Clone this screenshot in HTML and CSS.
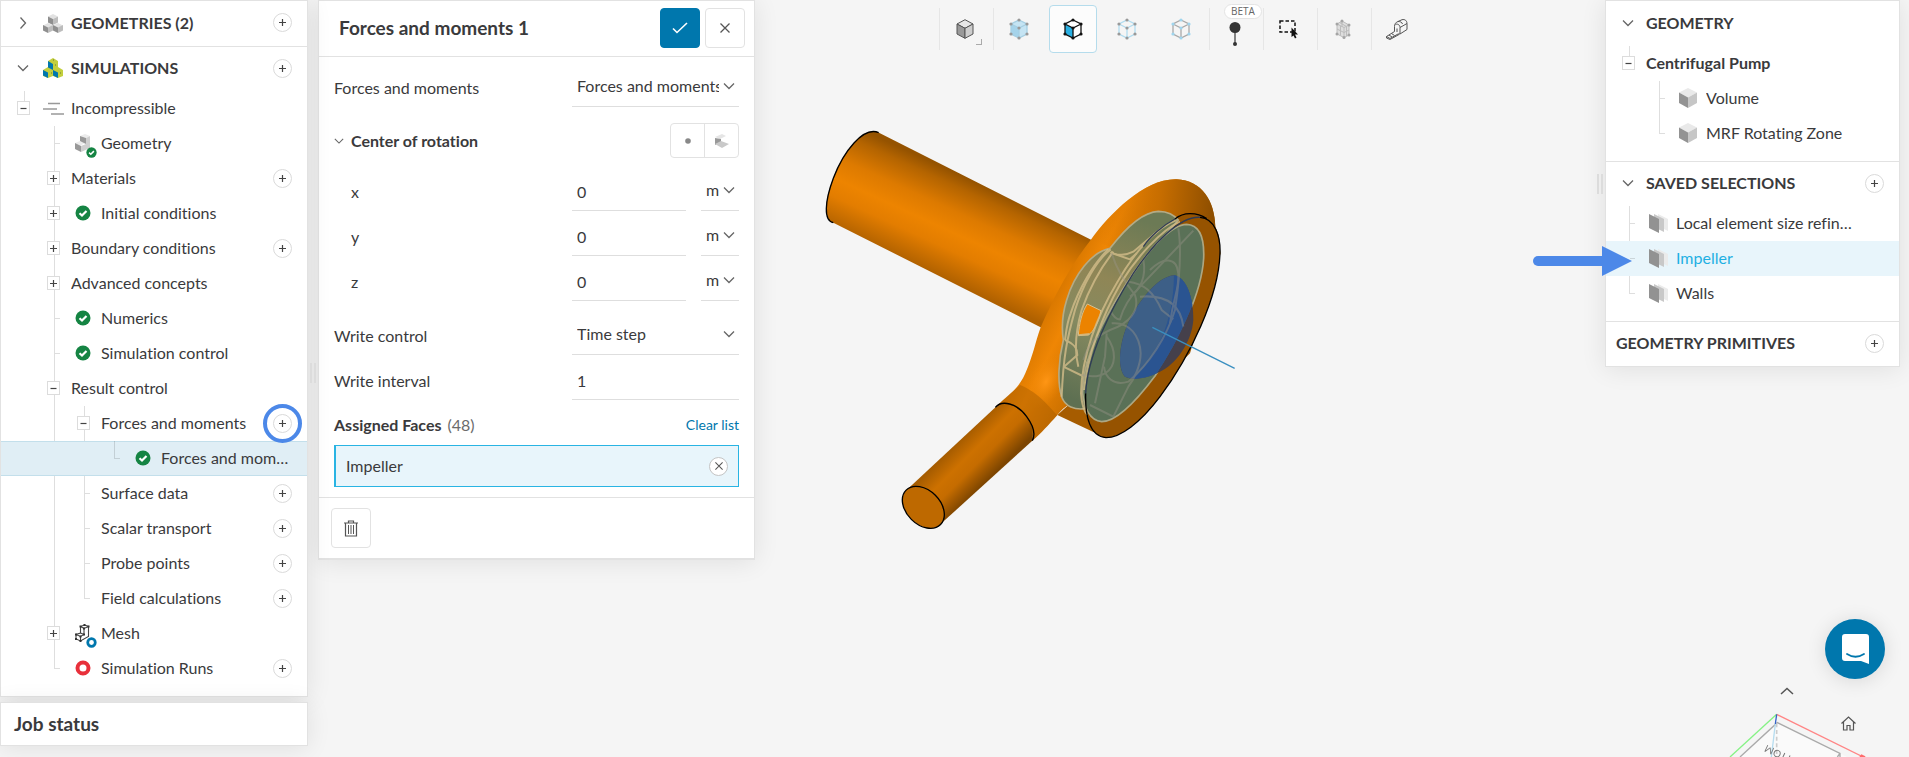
FILE: index.html
```html
<!DOCTYPE html>
<html lang="en">
<head>
    <meta charset="UTF-8">
    <meta name="viewport" content="width=device-width, initial-scale=1.0">
    <title>Centrifugal Pump - Forces and moments</title>
    <link rel="stylesheet" href="styles.css">
</head>
<body>
    <!-- Shared icons -->
    <svg class="sprite" aria-hidden="true">
        <symbol id="i-plus" viewBox="0 0 9 9"><path d="M4.5 1v7M1 4.5h7" stroke="#444" stroke-width="1.2"/></symbol>
        <symbol id="i-minus" viewBox="0 0 9 9"><path d="M1.5 4.5h6" stroke="#444" stroke-width="1.2"/></symbol>
        <symbol id="i-down" viewBox="0 0 12 12"><path d="M1 3.5l5 5 5-5" fill="none" stroke="#666" stroke-width="1.3"/></symbol>
        <symbol id="i-right" viewBox="0 0 14 14"><path d="M4.5 1.5l5 5.5-5 5.5" fill="none" stroke="#666" stroke-width="1.3"/></symbol>
        <symbol id="i-x" viewBox="0 0 10 10"><path d="M.5 .5l9 9M9.500 .5l-9 9" stroke="#555" stroke-width="1.3"/></symbol>
        <symbol id="i-ok" viewBox="0 0 16 16"><circle cx="8" cy="8" r="7.5" fill="#158443"/><path d="M4.5 8.2l2.500 2.300 4.500-4.500" fill="none" stroke="#fff" stroke-width="2.2"/></symbol>
        <symbol id="i-ring" viewBox="0 0 16 16"><circle cx="8" cy="8" r="5.5" fill="#fff" stroke="currentColor" stroke-width="4"/></symbol>
        <symbol id="i-cube" viewBox="0 0 18 20"><path d="M9 0l9 4.500-9 5-9-5z" fill="#e9e9e9"/><path d="M0 4.500l9 5V20l-9-5z" fill="#939393"/><path d="M18 4.500l-9 5V20l9-5z" fill="#c6c6c6"/></symbol>
        <symbol id="i-cubes" viewBox="0 0 20 20">
            <path d="M10 1l5 2.500-5 2.500-5-2.500zM5 10l5 2.500-5 2.500-5-2.500zM15 10l5 2.500-5 2.500-5-2.500z" fill="#e2e2e2"/>
            <path d="M5 3.500l5 2.500v6L5 9.500zM0 12l5 2.500V20l-5-2.500zM10 12l5 2.500V20l-5-2.500z" fill="#8f8f8f"/>
            <path d="M15 3.500L10 6v6l5-2.500zM10 12l-5 2.500V20l5-2.500zM20 12l-5 2.500V20l5-2.500z" fill="#bdbdbd"/>
        </symbol>
        <symbol id="i-cubes-color" viewBox="0 0 20 20">
            <path d="M10 0l5 3v6l5 3v6l-5 2-5-2-5 2-5-2v-6l5-3V3z" fill="#c3cf3d"/>
            <path d="M5 3l5 3v6L5 9.500zM0 12l5 2.500V20l-5-2.500zM10 12l5 2.500V20l-5-2.500z" fill="#0077ad"/>
            <path d="M12 7h1M8 15h1M17 15h1M10 2h1" stroke="#6a7a30"/>
        </symbol>
        <symbol id="i-part" viewBox="0 0 16 18">
            <path d="M5 2l5-2 5 2-4 2zM0 9l5-2 5 2-5 3z" fill="#ececec"/>
            <path d="M5 2l6 2v6L5 7zM0 9l6 3v6l-6-3z" fill="#999"/>
            <path d="M15 2l-4 2v6l-5 2v6l9-4z" fill="#cfcfcf"/>
        </symbol>
        <symbol id="i-mesh" viewBox="0 0 16 18">
            <path d="M5.500 2.500L9.500 1l4 1.500v10L5.500 17 1 15v-4.500L5.500 9zM5.500 2.500l3.500 2 4.500-2M9 4.500v6l-3.500 2L1 10.500M5.500 12.500V17M5.500 9L9 10.500" fill="none" stroke="#444" stroke-width="1.100"/>
            <path d="M4.500 1.500h2v2h-2zM8.500 0h2v2h-2zM12.500 1.500h2v2h-2zM8 3.500h2v2H8zM0 9.500h2v2H0zM4.500 11.500h2v2h-2zM0 14h2v2H0zM4.500 16h2v2h-2zM8 9.500h2v2H8z" fill="#333"/>
        </symbol>
        <symbol id="i-faces" viewBox="0 0 19 19">
            <path d="M9 0l10 5v12l-10-5z" fill="#ebebeb"/><path d="M5 0l10 5v13L5 13z" fill="#c8c8c8"/><path d="M0 0l10 5v14L0 14z" fill="#929292"/>
        </symbol>
        <symbol id="i-flow" viewBox="0 0 21 12"><path d="M5 1h12M0 6.500h14M8 11.500h13" stroke="#999" stroke-width="1.6"/></symbol>
        <symbol id="i-wire" viewBox="0 0 20 22">
            <path d="M10 2l8 4v10l-8 4-8-4V6zM2 6l8 4 8-4M10 10v10" fill="none" stroke="var(--edge)" stroke-width="1.3"/>
            <g fill="var(--dot)"><circle cx="10" cy="2" r="1.6"/><circle cx="18" cy="6" r="1.6"/><circle cx="18" cy="16" r="1.6"/><circle cx="10" cy="20" r="1.6"/><circle cx="2" cy="16" r="1.6"/><circle cx="2" cy="6" r="1.6"/><circle cx="10" cy="10" r="1.6"/></g>
        </symbol>
    </svg>

    <div class="app">
        <!-- Simulation tree -->
        <div class="sidebar">
            <nav class="panel">
                <section class="section">
                    <div class="heading">
                        <button class="fold" aria-label="Expand geometries"><svg width="14" height="14"><use href="#i-right"/></svg></button>
                        <span class="icon"><svg width="20" height="20"><use href="#i-cubes"/></svg></span>
                        <h2>GEOMETRIES (2)</h2>
                        <button class="add" aria-label="Add geometry"><svg width="9" height="9"><use href="#i-plus"/></svg></button>
                    </div>
                </section>
                <section class="section">
                    <div class="heading">
                        <button class="fold" aria-label="Collapse simulations"><svg width="12" height="12"><use href="#i-down"/></svg></button>
                        <span class="icon"><svg width="20" height="20"><use href="#i-cubes-color"/></svg></span>
                        <h2>SIMULATIONS</h2>
                        <button class="add" aria-label="Add simulation"><svg width="9" height="9"><use href="#i-plus"/></svg></button>
                    </div>
                    <ul class="tree">
                        <li>
                            <div class="row">
                                <button class="toggle" aria-label="Collapse"><svg width="9" height="9"><use href="#i-minus"/></svg></button>
                                <span class="icon"><svg width="21" height="13"><use href="#i-flow"/></svg></span>
                                <span class="name">Incompressible</span>
                            </div>
                            <ul>
                                <li class="leaf">
                                    <div class="row">
                                        <span class="icon"><svg width="16" height="18"><use href="#i-part"/></svg><svg class="badge" width="11" height="11"><use href="#i-ok"/></svg></span>
                                        <span class="name">Geometry</span>
                                    </div>
                                </li>
                                <li>
                                    <div class="row">
                                        <button class="toggle" aria-label="Expand"><svg width="9" height="9"><use href="#i-plus"/></svg></button>
                                        <span class="name">Materials</span>
                                        <button class="add" aria-label="Add material"><svg width="9" height="9"><use href="#i-plus"/></svg></button>
                                    </div>
                                </li>
                                <li>
                                    <div class="row">
                                        <button class="toggle" aria-label="Expand"><svg width="9" height="9"><use href="#i-plus"/></svg></button>
                                        <span class="icon"><svg width="16" height="16"><use href="#i-ok"/></svg></span>
                                        <span class="name">Initial conditions</span>
                                    </div>
                                </li>
                                <li>
                                    <div class="row">
                                        <button class="toggle" aria-label="Expand"><svg width="9" height="9"><use href="#i-plus"/></svg></button>
                                        <span class="name">Boundary conditions</span>
                                        <button class="add" aria-label="Add boundary condition"><svg width="9" height="9"><use href="#i-plus"/></svg></button>
                                    </div>
                                </li>
                                <li>
                                    <div class="row">
                                        <button class="toggle" aria-label="Expand"><svg width="9" height="9"><use href="#i-plus"/></svg></button>
                                        <span class="name">Advanced concepts</span>
                                    </div>
                                </li>
                                <li class="leaf">
                                    <div class="row">
                                        <span class="icon"><svg width="16" height="16"><use href="#i-ok"/></svg></span>
                                        <span class="name">Numerics</span>
                                    </div>
                                </li>
                                <li class="leaf">
                                    <div class="row">
                                        <span class="icon"><svg width="16" height="16"><use href="#i-ok"/></svg></span>
                                        <span class="name">Simulation control</span>
                                    </div>
                                </li>
                                <li>
                                    <div class="row">
                                        <button class="toggle" aria-label="Collapse"><svg width="9" height="9"><use href="#i-minus"/></svg></button>
                                        <span class="name">Result control</span>
                                    </div>
                                    <ul>
                                        <li>
                                            <div class="row">
                                                <button class="toggle" aria-label="Collapse"><svg width="9" height="9"><use href="#i-minus"/></svg></button>
                                                <span class="name">Forces and moments</span>
                                                <button class="add highlight" aria-label="Add forces and moments"><svg width="9" height="9"><use href="#i-plus"/></svg></button>
                                            </div>
                                            <ul>
                                                <li class="leaf">
                                                    <div class="row selected">
                                                        <span class="icon"><svg width="16" height="16"><use href="#i-ok"/></svg></span>
                                                        <span class="name">Forces and moments 1</span>
                                                    </div>
                                                </li>
                                            </ul>
                                        </li>
                                        <li class="leaf">
                                            <div class="row">
                                                <span class="name">Surface data</span>
                                                <button class="add" aria-label="Add surface data"><svg width="9" height="9"><use href="#i-plus"/></svg></button>
                                            </div>
                                        </li>
                                        <li class="leaf">
                                            <div class="row">
                                                <span class="name">Scalar transport</span>
                                                <button class="add" aria-label="Add scalar transport"><svg width="9" height="9"><use href="#i-plus"/></svg></button>
                                            </div>
                                        </li>
                                        <li class="leaf">
                                            <div class="row">
                                                <span class="name">Probe points</span>
                                                <button class="add" aria-label="Add probe points"><svg width="9" height="9"><use href="#i-plus"/></svg></button>
                                            </div>
                                        </li>
                                        <li class="leaf">
                                            <div class="row">
                                                <span class="name">Field calculations</span>
                                                <button class="add" aria-label="Add field calculation"><svg width="9" height="9"><use href="#i-plus"/></svg></button>
                                            </div>
                                        </li>
                                    </ul>
                                </li>
                                <li>
                                    <div class="row">
                                        <button class="toggle" aria-label="Expand"><svg width="9" height="9"><use href="#i-plus"/></svg></button>
                                        <span class="icon"><svg width="16" height="18"><use href="#i-mesh"/></svg><svg class="badge blue" width="11" height="11"><use href="#i-ring"/></svg></span>
                                        <span class="name">Mesh</span>
                                    </div>
                                </li>
                                <li class="leaf">
                                    <div class="row">
                                        <span class="icon red"><svg width="16" height="16"><use href="#i-ring"/></svg></span>
                                        <span class="name">Simulation Runs</span>
                                        <button class="add" aria-label="Add run"><svg width="9" height="9"><use href="#i-plus"/></svg></button>
                                    </div>
                                </li>
                            </ul>
                        </li>
                    </ul>
                </section>
            </nav>
            <div class="panel job-status"><h3>Job status</h3></div>
            <span class="handle"></span>
        </div>

        <!-- Settings of the selected item -->
        <form class="panel settings">
            <header class="settings-header">
                <h3>Forces and moments 1</h3>
                <button type="submit" class="btn btn-primary" aria-label="Apply"><svg width="16" height="12" viewBox="0 0 16 12"><path d="M1 6.500l4 4L15 1" fill="none" stroke="#fff" stroke-width="1.6"/></svg></button>
                <button type="button" class="btn" aria-label="Close"><svg width="10" height="10"><use href="#i-x"/></svg></button>
            </header>
            <div class="settings-body">
                <div class="field-row">
                    <label for="type">Forces and moments</label>
                    <div class="select">
                        <select id="type"><option>Forces and moments</option></select>
                        <svg width="12" height="12"><use href="#i-down"/></svg>
                    </div>
                </div>
                <div class="group-row">
                    <button type="button" class="fold-small" aria-label="Collapse center of rotation"><svg width="10" height="10"><use href="#i-down"/></svg></button>
                    <h4>Center of rotation</h4>
                    <div class="btn-group">
                        <button type="button" aria-label="Pick point"><svg width="6" height="6" viewBox="0 0 6 6"><circle cx="3" cy="3" r="2.8" fill="#888"/></svg></button>
                        <button type="button" aria-label="Pick volume"><svg width="14" height="14" viewBox="0 0 14 14"><path d="M0 3l7-3 4 2-6 3z" fill="#e5e5e5"/><path d="M0 4l6 1v3l-6 3z" fill="#999"/><path d="M0 10l6-3 8 3-7 4z" fill="#c9c9c9"/></svg></button>
                    </div>
                </div>
                <div class="field-row">
                    <label class="indent" for="cx">x</label>
                    <input class="value" id="cx" type="text" value="0">
                    <div class="select unit">
                        <select aria-label="Unit of x"><option>m</option></select>
                        <svg width="12" height="12"><use href="#i-down"/></svg>
                    </div>
                </div>
                <div class="field-row">
                    <label class="indent" for="cy">y</label>
                    <input class="value" id="cy" type="text" value="0">
                    <div class="select unit">
                        <select aria-label="Unit of y"><option>m</option></select>
                        <svg width="12" height="12"><use href="#i-down"/></svg>
                    </div>
                </div>
                <div class="field-row">
                    <label class="indent" for="cz">z</label>
                    <input class="value" id="cz" type="text" value="0">
                    <div class="select unit">
                        <select aria-label="Unit of z"><option>m</option></select>
                        <svg width="12" height="12"><use href="#i-down"/></svg>
                    </div>
                </div>
                <div class="field-row spaced">
                    <label for="write-control">Write control</label>
                    <div class="select">
                        <select id="write-control"><option>Time step</option></select>
                        <svg width="12" height="12"><use href="#i-down"/></svg>
                    </div>
                </div>
                <div class="field-row">
                    <label for="write-interval">Write interval</label>
                    <input id="write-interval" type="text" value="1">
                </div>
                <div class="faces-row">
                    <h4>Assigned Faces</h4>
                    <span class="count">(48)</span>
                    <a href="#">Clear list</a>
                </div>
                <div class="face">
                    <span>Impeller</span>
                    <button type="button" class="remove" aria-label="Remove Impeller"><svg width="8" height="8"><use href="#i-x"/></svg></button>
                </div>
            </div>
            <footer class="settings-footer">
                <button type="button" class="btn" aria-label="Delete">
                    <svg width="14" height="17" viewBox="0 0 14 17" fill="none" stroke="#555"><path d="M0 3h14M4.500 3V1h5v2M1.500 3v13h11V3" stroke-width="1.2"/><path d="M4.500 5v9M7 5v9M9.500 5v9"/></svg>
                </button>
            </footer>
        </form>

        <!-- 3D view -->
        <main class="viewer">
            <div class="toolbar">
                <button class="divided corner-mark" aria-label="Render mode">
                    <svg width="18" height="20" viewBox="0 0 18 20" stroke="#555" stroke-linejoin="round"><path d="M9 .7l8 4.300-8 4.300L1 5z" fill="#e6e6e6"/><path d="M1 5l8 4.300v10L1 15z" fill="#999"/><path d="M17 5L9 9.300v10l8-4.300z" fill="#cdcdcd"/></svg>
                </button>
                <button class="divided tool-volume" aria-label="Select volumes"><svg width="20" height="22" viewBox="0 0 20 22"><path d="M10 2l8 4v10l-8 4-8-4V6z" fill="#c5e4f3"/><path d="M2 6l8 4v10l-8-4z" fill="#a5d3ea"/><use href="#i-wire"/></svg></button>
                <button class="active tool-face" aria-label="Select faces"><svg width="20" height="22" viewBox="0 0 20 22"><path d="M10 2l8 4v10l-8 4-8-4V6z" fill="#fff"/><path d="M2 6l8 4v10l-8-4z" fill="#29b0e3"/><use href="#i-wire"/></svg></button>
                <button class="tool-vertex" aria-label="Select vertices"><svg width="20" height="22"><use href="#i-wire"/></svg></button>
                <button class="tool-edge" aria-label="Select edges"><svg width="20" height="22"><use href="#i-wire"/></svg></button>
                <button class="divided" aria-label="Probe">
                    <span class="beta">BETA</span>
                    <svg class="probe" width="12" height="24" viewBox="0 0 12 24"><path d="M6 5v17" stroke="#444" stroke-width="1.3"/><circle cx="6" cy="5.5" r="5.5" fill="#333"/><circle cx="6" cy="22" r="2" fill="#333"/></svg>
                </button>
                <button class="divided" aria-label="Box select"><svg width="20" height="20" viewBox="0 0 20 20"><path d="M1 2h15v11H1z" fill="none" stroke="#111" stroke-width="1.5" stroke-dasharray="3.5 2"/><path d="M12.500 8.500l6.500 7h-3l1.500 3-1.500 1-1.500-3-2 1.500z" fill="#111"/></svg></button>
                <button class="divided" aria-label="Mesh clip">
                    <svg width="16" height="20" viewBox="0 0 16 20"><path d="M2 5l5-3 7 4v10l-5 2.500L2 15z" fill="#dedede"/><path d="M2 5l7 3.500 5-2.500M9 8.500v10M7 2v6M2 5l5-3 7 4v10l-5 2.500L2 15zM2 10l7 3.500 5-2.500M5.500 7v9.500M4.500 3.500l7 4v9.500" fill="none" stroke="#bcbcbc"/><g fill="#a5a5a5"><circle cx="2" cy="5" r="1.5"/><circle cx="7" cy="2" r="1.5"/><circle cx="14" cy="6" r="1.5"/><circle cx="14" cy="16" r="1.5"/><circle cx="9" cy="18.500" r="1.5"/><circle cx="2" cy="15" r="1.5"/></g></svg>
                </button>
                <button class="divided" aria-label="Measure">
                    <svg width="22" height="21" viewBox="0 0 22 21" fill="none" stroke="#555"><path d="M8.500 12.500V7.500C8.500 5 10 3 12 2.500L16 .7c3-.7 5 1 5 4v5.800l-7 4.500V8.500C14 5.500 11 4.500 9.500 5.500M14 8.500l7-4M12 2.500c2 0 4 .5 4.500 2.500"/><path d="M11 13V9.500M8.500 12.500l-8 5 3.500 2 8-4.500 2 0M0.500 17.500v1.500l3.500 1.500 9-5M3 16l3 2M5.500 14.500l3 2" /></svg>
                </button>
            </div>

            <svg class="scene" viewBox="-135 -159 2550 2100" preserveAspectRatio="xMidYMin meet" role="img" aria-label="Centrifugal pump model">
                <defs>
                    <linearGradient id="g-inlet" gradientUnits="userSpaceOnUse" x1="552" y1="228" x2="426" y2="502">
                        <stop offset="0" stop-color="#955300"/><stop offset=".12" stop-color="#b46400"/><stop offset=".35" stop-color="#dd7a00"/><stop offset=".55" stop-color="#ed8400"/><stop offset=".72" stop-color="#e37d00"/><stop offset="1" stop-color="#b06100"/>
                    </linearGradient>
                    <linearGradient id="g-outlet" gradientUnits="userSpaceOnUse" x1="460" y1="1010" x2="562" y2="1112">
                        <stop offset="0" stop-color="#a65c00"/><stop offset=".35" stop-color="#cd7100"/><stop offset=".6" stop-color="#c56c00"/><stop offset="1" stop-color="#7d4500"/>
                    </linearGradient>
                    <linearGradient id="g-volute" gradientUnits="userSpaceOnUse" x1="700" y1="560" x2="1240" y2="840">
                        <stop offset="0" stop-color="#9c5700"/><stop offset=".09" stop-color="#d97800"/><stop offset=".2" stop-color="#ef8604"/><stop offset=".42" stop-color="#c76e00"/><stop offset="1" stop-color="#8a4c00"/>
                    </linearGradient>
                    <linearGradient id="g-top" gradientUnits="userSpaceOnUse" x1="900" y1="300" x2="1245" y2="330">
                        <stop offset="0" stop-color="#dc7900" stop-opacity="0"/><stop offset=".5" stop-color="#c86e00"/><stop offset="1" stop-color="#8b4d00"/>
                    </linearGradient>
                    <linearGradient id="g-back" gradientUnits="userSpaceOnUse" x1="1000" y1="320" x2="800" y2="860">
                        <stop offset="0" stop-color="#6c7a55"/><stop offset=".35" stop-color="#8f8656"/><stop offset=".6" stop-color="#868a60"/><stop offset="1" stop-color="#5e7052"/>
                    </linearGradient>
                    <radialGradient id="g-glow"><stop offset="0" stop-color="#ff9615"/><stop offset="1" stop-color="#ef8604" stop-opacity="0"/></radialGradient>
                    <clipPath id="front-clip"><path d="M1160 343C1204 345 1213 395 1211 445C1205 550 1135 695 1065 798C1000 885 945 935 905 935C868 932 852 890 848 850C846 740 925 600 1000 490C1050 415 1115 343 1160 343Z"/></clipPath>
                </defs>

                <!-- Inlet pipe -->
                <path d="M234 67L900 403L760 671L100 338C70 330 74 270 100 205C130 125 190 48 234 67Z" fill="url(#g-inlet)"/>
                <path d="M236 68C190 48 130 125 100 205C74 275 70 332 100 338" fill="none" stroke="#000" stroke-width="4"/>

                <!-- Volute -->
                <path d="M772 915L880 966L960 930L900 800Z" fill="#a65c00"/>
                <path d="M872 390C930 310 1035 205 1130 208C1205 212 1243 270 1246 350L1262 430L1170 730L1000 900L880 880C840 870 810 868 772 915C745 945 725 968 697 992C705 930 650 870 588 890C630 850 655 838 676 790C700 735 705 700 722 652C750 590 800 480 872 390Z" fill="url(#g-volute)"/>
                <path d="M872 390C930 310 1035 205 1130 208C1205 212 1243 270 1246 350L1180 430L960 420Z" fill="url(#g-top)"/>
                <ellipse cx="738" cy="815" rx="50" ry="85" transform="rotate(25 738 815)" fill="url(#g-glow)"/>
                <path d="M588 890C630 850 640 845 660 825C720 850 745 890 772 915C745 945 725 968 697 992C705 930 650 870 588 890Z" fill="#a45a00" opacity=".45"/>

                <!-- Outlet pipe -->
                <path d="M319 1141L588 890C640 860 710 920 697 992L421 1243Z" fill="url(#g-outlet)"/>
                <path d="M586 892C605 870 650 878 680 920C702 950 706 975 697 992" fill="none" stroke="#000" stroke-width="4"/>
                <ellipse cx="370" cy="1192" rx="73" ry="51" transform="rotate(45 370 1192)" fill="#be6900" stroke="#000" stroke-width="4"/>

                <!-- Front disc -->
                <path d="M1125 327C1150 306 1190 306 1220 326C1250 340 1262 380 1260 430C1256 560 1170 740 1080 860C1020 940 960 983 918 983C870 980 855 920 857 850C862 740 930 600 1000 490C1050 415 1080 360 1125 327Z" fill="#965300"/>

                <!-- Impeller -->
                <path d="M1075 304C1105 304 1120 315 1135 330L1000 490L860 760L855 896C825 900 795 890 785 860C772 820 775 750 790 690C784 650 786 615 800 570C822 495 875 425 930 415C980 350 1030 306 1075 304Z" fill="url(#g-back)" stroke="#b5ab85" stroke-width="5"/>
                <path d="M862 582L903 602C895 640 880 665 865 675L835 676C838 640 846 605 862 582Z" fill="#ec8300" stroke="#d9c08c" stroke-width="3"/>
                <path d="M1160 343C1204 345 1213 395 1211 445C1205 550 1135 695 1065 798C1000 885 945 935 905 935C868 932 852 890 848 850C846 740 925 600 1000 490C1050 415 1115 343 1160 343Z" fill="#5a7157" stroke="#aca783" stroke-width="5"/>

                <!-- Hub -->
                <path d="M1122 496C1160 500 1182 570 1180 630C1175 700 1125 765 1080 785C1040 805 1000 812 975 800C950 770 960 700 980 650C1010 580 1070 500 1122 496Z" fill="#45404b"/>
                <g clip-path="url(#front-clip)">
                    <path d="M1122 496C1160 500 1182 570 1180 630C1175 700 1125 765 1080 785C1040 805 1000 812 975 800C950 770 960 700 980 650C1010 580 1070 500 1122 496Z" fill="#3d5f87"/>
                    <path d="M1122 496C1160 500 1182 570 1180 630C1175 700 1125 765 1080 785C1050 800 1020 806 1000 806C1070 740 1120 640 1122 496Z" fill="#2a5491"/>
                </g>

                <!-- Blade edges -->
                <g fill="none" stroke="#d3bd8a" stroke-width="6" opacity=".8">
                    <path d="M932 418C890 450 850 520 825 600C800 690 790 740 785 860"/>
                    <path d="M940 425C905 470 870 530 845 600C825 670 822 720 835 770"/>
                    <path d="M925 418C880 460 835 540 812 610C800 640 798 670 795 690"/>
                    <path d="M1130 330C1070 350 1000 430 950 520C890 620 845 740 843 850C845 880 850 900 862 915"/>
                    <path d="M1140 335C1085 360 1010 440 962 520C905 620 862 740 852 840"/>
                    <path d="M932 428L990 448L1010 430M790 770L848 798M835 676L868 672M795 690C820 700 832 712 832 735L792 770"/>
                    <path d="M932 425C950 440 980 435 1000 425L1075 362"/>
                </g>
                <g fill="none" stroke="#9b968a" stroke-width="6" opacity=".4">
                    <path d="M1180 362L1020 530C980 570 965 610 960 628C945 630 935 610 930 600"/>
                    <path d="M935 430C950 480 985 530 1005 555C1020 600 990 640 930 660C890 680 870 690 850 750"/>
                    <path d="M1030 450C1040 500 1020 540 990 560M1050 480C1090 440 1130 440 1135 490C1138 540 1120 560 1110 640"/>
                    <path d="M1135 355C1145 420 1140 500 1125 600C1100 680 1050 760 985 815C940 830 915 800 912 770"/>
                    <path d="M920 680C950 720 950 770 915 790C890 805 860 798 845 795M885 880L915 740L920 670"/>
                    <path d="M935 640C990 635 1020 680 1022 730C1022 770 1000 810 985 830L940 920L870 885"/>
                    <path d="M985 515C1030 520 1060 545 1085 600L1120 628M1020 560C1080 555 1140 570 1150 650"/>
                </g>

                <path d="M1125 327C1150 306 1190 306 1220 326M1200 322C1245 325 1262 380 1260 430C1256 560 1170 740 1080 860C1020 940 960 983 918 983C870 980 855 920 857 850" fill="none" stroke="#000" stroke-width="4"/>
                <path d="M1200 322C1140 318 1060 400 1000 490C930 600 862 740 857 850M1125 327C1090 345 1050 380 1030 410" fill="none" stroke="#2f3c55" stroke-width="4"/>

                <!-- Rotation axis -->
                <path d="M1057 652L1304 775" stroke="#3a8fc0" stroke-width="4"/>
            </svg>
        </main>

        <!-- Geometry tree -->
        <div class="geometry">
            <div class="panel">
                <section class="section">
                    <div class="heading">
                        <button class="fold" aria-label="Collapse geometry"><svg width="12" height="12"><use href="#i-down"/></svg></button>
                        <h2>GEOMETRY</h2>
                    </div>
                    <ul class="tree">
                        <li>
                            <div class="row">
                                <button class="toggle" aria-label="Collapse"><svg width="9" height="9"><use href="#i-minus"/></svg></button>
                                <span class="name strong">Centrifugal Pump</span>
                            </div>
                            <ul>
                                <li class="leaf">
                                    <div class="row">
                                        <span class="icon"><svg width="18" height="20"><use href="#i-cube"/></svg></span>
                                        <span class="name">Volume</span>
                                    </div>
                                </li>
                                <li class="leaf">
                                    <div class="row">
                                        <span class="icon"><svg width="18" height="20"><use href="#i-cube"/></svg></span>
                                        <span class="name">MRF Rotating Zone</span>
                                    </div>
                                </li>
                            </ul>
                        </li>
                    </ul>
                </section>
                <section class="section">
                    <div class="heading">
                        <button class="fold" aria-label="Collapse saved selections"><svg width="12" height="12"><use href="#i-down"/></svg></button>
                        <h2>SAVED SELECTIONS</h2>
                        <button class="add" aria-label="Add selection"><svg width="9" height="9"><use href="#i-plus"/></svg></button>
                    </div>
                    <ul class="tree">
                        <li class="leaf">
                            <div class="row">
                                <span class="icon"><svg width="19" height="19"><use href="#i-faces"/></svg></span>
                                <span class="name">Local element size refinement</span>
                            </div>
                        </li>
                        <li class="leaf">
                            <div class="row picked">
                                <span class="icon"><svg width="19" height="19"><use href="#i-faces"/></svg></span>
                                <span class="name">Impeller</span>
                                <svg class="arrow" width="99" height="30" viewBox="0 0 99 30" aria-hidden="true"><path d="M5 15h66" stroke="#4c88e8" stroke-width="10" stroke-linecap="round"/><path d="M69 0l30 15-30 15z" fill="#4c88e8"/></svg>
                            </div>
                        </li>
                        <li class="leaf">
                            <div class="row">
                                <span class="icon"><svg width="19" height="19"><use href="#i-faces"/></svg></span>
                                <span class="name">Walls</span>
                            </div>
                        </li>
                    </ul>
                </section>
                <section class="section">
                    <div class="heading flush">
                        <h2>GEOMETRY PRIMITIVES</h2>
                        <button class="add" aria-label="Add primitive"><svg width="9" height="9"><use href="#i-plus"/></svg></button>
                    </div>
                </section>
            </div>
            <span class="handle"></span>
        </div>
    </div>

    <!-- View cube and chat -->
    <div class="corner">
        <svg class="view-cube" viewBox="0 0 627 471" fill="none">
            <path d="M232 368L120 471H440L420 460Z" fill="#fafafa"/>
            <path d="M120 471L232 368L420 460V471M420 460L412 471" stroke="#aaa" stroke-width="4"/>
            <path d="M230 370V471" stroke="#ccc" stroke-width="5" stroke-dasharray="12 8"/>
            <path d="M90 471L230 343" stroke="#85f285" stroke-width="4"/>
            <path d="M230 343L490 471" stroke="#ff8585" stroke-width="4"/>
            <path d="M478 471l6-8 12 6v2z" fill="#ff6b6b"/>
            <path d="M230 343L226 372" stroke="#3564c8" stroke-width="4"/>
            <path d="M226 372L214 471" stroke="#b5dcef" stroke-width="4"/>
            <text x="200" y="434" text-anchor="end" transform="rotate(205 200 434)" font-size="30" fill="#777">BOTTOM</text>
        </svg>
        <button class="rotate-up" aria-label="Rotate up"><svg width="14" height="8" viewBox="0 0 14 8"><path d="M1 7l6-5.500L13 7" fill="none" stroke="#555" stroke-width="1.5"/></svg></button>
        <button class="home" aria-label="Home view"><svg width="15" height="15" viewBox="0 0 15 15" fill="none" stroke="#555" stroke-width="1.2"><path d="M.5 7.500l7-6.500 7 6.500M2.500 6v8h3.500V9.500h3V14h3.500V6"/></svg></button>
        <button class="chat" aria-label="Open chat"><svg width="27" height="30" viewBox="0 0 27 30"><path d="M3 0h21a3 3 0 0 1 3 3v27l-8-3H3a3 3 0 0 1-3-3V3a3 3 0 0 1 3-3z" fill="#fff"/><path d="M5 20q8.500 5.500 17 0" fill="none" stroke="#0077ad" stroke-width="1.8" stroke-linecap="round"/></svg></button>
    </div>
</body>
</html>
```

FILE: styles.css
```css
/* Global Styling */
* {
    margin: 0;
    padding: 0;
    box-sizing: border-box;
}

:root {
    --line: #e2e2e2;
    --blue: #0077ad;
    --text: #3a3a3c;
}

body {
    height: 100vh;
    overflow: hidden;
    background: #f5f5f5;
    color: var(--text);
    font-family: "Lato", sans-serif;
    font-size: 16px;
    line-height: 20px;
    font-variant-ligatures: none;
}

button, input, select {
    font: inherit;
    color: inherit;
    border: none;
    background: none;
    outline: none;
    border-radius: 0;
}

button {
    display: flex;
    align-items: center;
    justify-content: center;
    flex: none;
    cursor: pointer;
}

svg {
    display: block;
    flex: none;
}

ul {
    list-style: none;
}

h2, h3, h4 {
    font-size: 16px;
    font-weight: 700;
}

h3 {
    font-size: 19px;
}

.sprite {
    position: absolute;
    width: 0;
    height: 0;
}

/* Page layout */
.app {
    display: grid;
    grid-template-columns: 308px 437px minmax(0, 1fr) 295px;
    align-items: start;
    height: 100vh;
    padding-right: 9px;
}

.panel {
    background: #fff;
    border: 1px solid var(--line);
    box-shadow: 0 2px 24px rgba(0, 0, 0, 0.09);
}

.sidebar {
    position: relative;
    display: flex;
    flex-direction: column;
    gap: 5px;
}

.settings {
    margin-left: 10px;
    margin-right: -10px;
    border-bottom-width: 2px;
}

.job-status {
    padding: 11px 13px;
}

.geometry {
    position: relative;
}

/* Drag handles beside the panels */
.handle {
    position: absolute;
    top: 50%;
    right: -8px;
    width: 6px;
    height: 20px;
    margin-top: -10px;
    border: 2px solid #dcdcdc;
    border-width: 0 2px;
}

.geometry .handle {
    right: auto;
    left: -8px;
}

/* Sections and trees */
.section + .section {
    border-top: 1px solid var(--line);
}

.heading {
    display: flex;
    align-items: center;
    height: 45px;
    padding: 0 15px 2px 15px;
}

.section + .section .heading {
    height: 44px;
}

.heading.flush {
    padding-left: 10px;
}

.heading h2 {
    flex: 1;
}

.fold {
    width: 14px;
    height: 14px;
    margin-right: 11px;
}

.icon {
    position: relative;
    display: flex;
    align-items: center;
    justify-content: center;
    flex: none;
    width: 24px;
    height: 24px;
    margin-right: 6px;
}

.badge {
    position: absolute;
    right: -2px;
    bottom: -3px;
}

.blue {
    color: var(--blue);
}

.red {
    color: #e8303b;
}

.add {
    position: relative;
    width: 19px;
    height: 19px;
    border: 1px solid #dadada;
    border-radius: 50%;
    background: #fff;
}

.highlight::after {
    content: "";
    position: absolute;
    z-index: 2;
    inset: -11px;
    border: 4px solid #4c88e8;
    border-radius: 50%;
}

.tree {
    --depth: 0;
    padding-bottom: 10px;
}

.tree ul {
    --depth: 1;
}

.tree ul ul {
    --depth: 2;
}

.tree ul ul ul {
    --depth: 3;
}

.tree li {
    position: relative;
}

/* Guide lines */
.tree li::before {
    content: "";
    position: absolute;
    top: 0;
    bottom: 0;
    left: calc(23px + 30px * var(--depth));
    width: 1px;
    background: rgba(0, 0, 0, 0.13);
}

.tree li:last-child::before {
    bottom: auto;
    height: 18px;
}

.tree li.leaf::after {
    content: "";
    position: absolute;
    top: 17px;
    left: calc(24px + 30px * var(--depth));
    width: 5px;
    height: 1px;
    background: rgba(0, 0, 0, 0.13);
}

.row {
    display: flex;
    align-items: center;
    height: 35px;
    padding: 0 15px 1px calc(16px + 30px * var(--depth));
}

.leaf > .row {
    padding-left: calc(40px + 30px * var(--depth));
}

.toggle {
    position: relative;
    z-index: 1;
    width: 13px;
    height: 14px;
    margin-right: 11px;
    border: 1px solid #dcdcdc;
    background: #fff;
}

.name {
    flex: 1;
    min-width: 0;
    overflow: hidden;
    white-space: nowrap;
    text-overflow: ellipsis;
}

.strong {
    font-weight: 700;
}

.row.selected {
    background: #e0eef5;
    border-top: 1px solid #c3dfeb;
    border-bottom: 1px solid #c3dfeb;
}

.row.picked {
    position: relative;
    background: #e8f5fb;
    color: #1fb0e3;
}

.geometry .row {
    padding-right: 44px;
}

.arrow {
    position: absolute;
    z-index: 2;
    left: -73px;
    top: 5px;
}

/* Settings form */
.settings-header {
    display: flex;
    align-items: center;
    gap: 5px;
    height: 56px;
    padding: 0 9px 1px 20px;
    border-bottom: 1px solid var(--line);
}

.settings-header h3 {
    flex: 1;
}

.btn {
    width: 40px;
    height: 40px;
    border: 1px solid var(--line);
    border-radius: 4px;
}

.btn-primary {
    background: var(--blue);
    border-color: var(--blue);
}

.settings-body {
    padding: 5px 15px 10px;
}

.field-row {
    display: flex;
    align-items: flex-end;
    gap: 15px;
    height: 45px;
}

.field-row.spaced {
    margin-top: 9px;
}

.field-row label {
    flex: 1;
    line-height: 39px;
}

.field-row label.indent {
    padding-left: 17px;
}

.field-row input, .select {
    width: 167px;
    height: 40px;
    border-bottom: 1px solid #dedede;
}

.field-row input {
    padding: 1px 5px 0 5px;
}

.field-row input.value {
    width: 114px;
}

.select {
    position: relative;
}

.select.unit {
    width: 38px;
}

.select select {
    width: 100%;
    height: 38px;
    padding: 0 20px 0 5px;
    appearance: none;
}

.select svg {
    position: absolute;
    right: 4px;
    top: 13px;
    pointer-events: none;
}

.group-row {
    display: flex;
    align-items: center;
    padding: 16px 0 8px;
}

.group-row h4 {
    flex: 1;
}

.fold-small {
    width: 10px;
    margin-right: 7px;
}

.btn-group {
    display: flex;
    height: 35px;
    border: 1px solid var(--line);
    border-radius: 4px;
}

.btn-group button {
    width: 33px;
}

.btn-group button + button {
    width: 34px;
    border-left: 1px solid var(--line);
}

.faces-row {
    display: flex;
    align-items: center;
    gap: 6px;
    height: 45px;
    padding-top: 5px;
}

.count {
    flex: 1;
    color: #6b6b6b;
}

.faces-row a {
    color: var(--blue);
    font-size: 14px;
    text-decoration: none;
}

.face {
    display: flex;
    align-items: center;
    justify-content: space-between;
    height: 42px;
    padding: 0 10px;
    border: 1px solid #29b4e3;
    border-left-width: 2px;
    background: #e8f5fb;
}

.remove {
    width: 19px;
    height: 19px;
    border: 1px solid #c4c4c4;
    border-radius: 50%;
    background: #fff;
}

.settings-footer {
    padding: 10px 12px;
    border-top: 1px solid var(--line);
}

/* 3D view */
.viewer {
    display: flex;
    flex-direction: column;
    min-width: 0;
    height: 100vh;
    margin-left: 10px;
}

.toolbar {
    display: flex;
    justify-content: center;
    gap: 6px;
    height: 57px;
    padding: 5px 0 4px 2px;
}

.toolbar button {
    position: relative;
    width: 48px;
    height: 48px;
    border: 1px solid transparent;
    --edge: #999;
    --dot: #999;
}

.toolbar .divided::before {
    content: "";
    position: absolute;
    top: 2px;
    bottom: 2px;
    left: -3px;
    width: 1px;
    background: #e6e6e6;
}

.toolbar .active {
    border-color: #b5dcec;
    border-radius: 4px;
    background: #fcfcfc;
}

.toolbar .tool-volume {
    --edge: #a5cfe3;
}

.toolbar .tool-face {
    --edge: #111;
    --dot: #111;
}

.toolbar .tool-vertex {
    --edge: #b0dcf0;
}

.toolbar .tool-edge {
    --edge: #a8a8a8;
    --dot: #9fd5ee;
}

.corner-mark::after {
    content: "";
    position: absolute;
    right: 6px;
    bottom: 7px;
    width: 5px;
    height: 5px;
    border: solid #aaa;
    border-width: 0 1px 1px 0;
}

.beta {
    position: absolute;
    top: -2px;
    left: 12px;
    padding: 0 6px;
    border: 1px solid #e4e4e4;
    border-radius: 8px;
    background: #fff;
    color: #666;
    font-family: "Open Sans", sans-serif;
    font-size: 10px;
    line-height: 13px;
}

.toolbar .probe {
    margin-top: 10px;
}

.scene {
    flex: 1;
    width: 100%;
    min-height: 0;
}

/* View cube and chat */
.corner {
    position: fixed;
    right: 0;
    bottom: 0;
    width: 209px;
    height: 157px;
}

.view-cube {
    width: 100%;
    height: 100%;
}

.corner button {
    position: absolute;
}

.rotate-up {
    left: 80px;
    top: 87px;
}

.home {
    left: 141px;
    top: 116px;
}

.chat {
    right: 24px;
    top: 19px;
    width: 60px;
    height: 60px;
    border-radius: 50%;
    background: var(--blue);
    box-shadow: 0 2px 20px rgba(0, 0, 0, 0.12);
}
```
